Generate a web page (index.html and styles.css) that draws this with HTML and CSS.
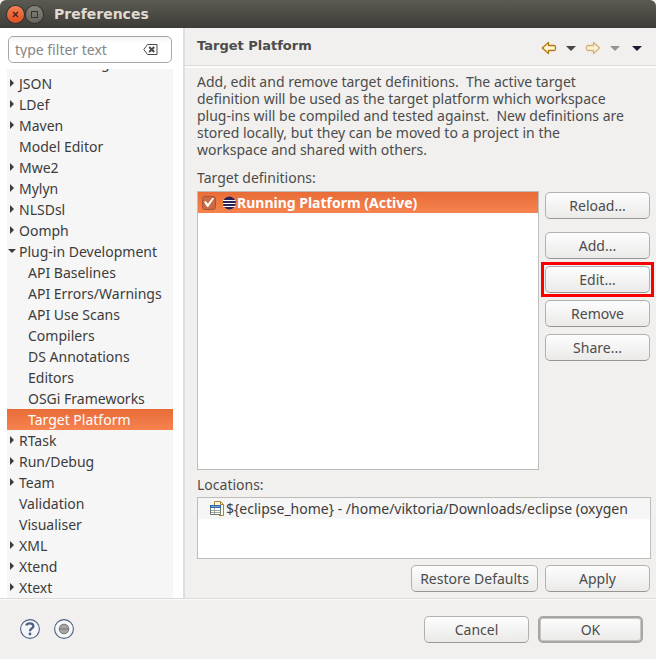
FILE: index.html
```html
<!DOCTYPE html>
<html lang="en">
<head>
<meta charset="utf-8">
<title>Preferences</title>
<link rel="stylesheet" href="styles.css">
</head>
<body>
<header class="titlebar">
  <button class="win close" aria-label="Close"><svg width="17" height="17" viewBox="0 0 17 17"><path d="M6 6l5 5M11 6l-5 5" stroke="#43210f" stroke-width="1.3"/></svg></button>
  <button class="win max" aria-label="Maximize"><svg width="17" height="17" viewBox="0 0 17 17"><rect x="5.5" y="5.5" width="6" height="6" fill="none" stroke="#35342f"/></svg></button>
  <span class="title">Preferences</span>
</header>
<div class="body">
  <nav class="side">
    <div class="filter">
      <input type="text" placeholder="type filter text" aria-label="Filter preferences">
      <button class="clear" aria-label="Clear filter"><svg width="15" height="11" viewBox="0 0 15 11"><path d="M4.5.5h9.500v10H4.500L.8 5.500z" fill="none" stroke="#4a4a48"/><path d="M6.200 3l5 5M11.200 3l-5 5" stroke="#4a4a48" stroke-width="2"/></svg></button>
    </div>
    <ul class="tree">
      <li class="cut">g</li>
      <li class="shut">JSON</li>
      <li class="shut">LDef</li>
      <li class="shut">Maven</li>
      <li>Model Editor</li>
      <li class="shut">Mwe2</li>
      <li class="shut">Mylyn</li>
      <li class="shut">NLSDsl</li>
      <li class="shut">Oomph</li>
      <li class="open">Plug-in Development</li>
      <li class="sub">API Baselines</li>
      <li class="sub">API Errors/Warnings</li>
      <li class="sub">API Use Scans</li>
      <li class="sub">Compilers</li>
      <li class="sub">DS Annotations</li>
      <li class="sub">Editors</li>
      <li class="sub">OSGi Frameworks</li>
      <li class="sub chosen">Target Platform</li>
      <li class="shut">RTask</li>
      <li class="shut">Run/Debug</li>
      <li class="shut">Team</li>
      <li>Validation</li>
      <li>Visualiser</li>
      <li class="shut">XML</li>
      <li class="shut">Xtend</li>
      <li class="shut">Xtext</li>
    </ul>
  </nav>
  <main class="page">
    <div class="pagehead">
      <h1>Target Platform</h1>
      <div class="history">
        <button aria-label="Back"><svg width="16" height="14" viewBox="0 0 16 14"><path d="M7.500 1.500v3h5.500q1.500 0 1.500 1.500v2q0 1.500-1.500 1.500H7.500v3L1.300 7z" fill="#fff6cf" stroke="#b07a10" stroke-width="1.300" stroke-linejoin="round"/></svg></button>
        <button aria-label="Back history"><svg width="10" height="5" viewBox="0 0 10 5"><path d="M0 0h10L5 5z" fill="#454543"/></svg></button>
        <button aria-label="Forward"><svg width="16" height="14" viewBox="0 0 16 14"><path d="M8.500 1.500v3H3q-1.500 0-1.500 1.500v2q0 1.500 1.500 1.500h5.500v3L14.700 7z" fill="#faf0d6" stroke="#d5b278" stroke-width="1.300" stroke-linejoin="round"/></svg></button>
        <button aria-label="Forward history"><svg width="10" height="5" viewBox="0 0 10 5"><path d="M0 0h10L5 5z" fill="#939390"/></svg></button>
        <button aria-label="View menu"><svg width="10" height="5" viewBox="0 0 10 5"><path d="M0 0h10L5 5z" fill="#241537"/></svg></button>
      </div>
    </div>
    <div class="content">
      <p class="about">Add, edit and remove target definitions.&nbsp; The active target<br>definition will be used as the target platform which workspace<br>plug-ins will be compiled and tested against.&nbsp; New definitions are<br>stored locally, but they can be moved to a project in the<br>workspace and shared with others.</p>
      <h2>Target definitions:</h2>
      <div class="targets">
        <div class="list">
          <label class="target"><input type="checkbox" checked>
            <svg width="14" height="14" viewBox="0 0 14 14"><circle cx="6.500" cy="7" r="6.500" fill="#f7941e"/><circle cx="7.300" cy="7" r="6.500" fill="#2c2255"/><path d="M1 4.500h12.500M1 7.500h12.500M1 10.500h12.500" stroke="#fff"/></svg>
            <span>Running Platform (Active)</span></label>
        </div>
        <div class="actions">
          <button class="btn reload">Reload...</button>
          <button class="btn">Add...</button>
          <button class="btn marked">Edit...</button>
          <button class="btn">Remove</button>
          <button class="btn">Share...</button>
        </div>
      </div>
      <h2>Locations:</h2>
      <ul class="locations">
        <li><svg width="14" height="15" viewBox="0 0 14 15"><path d="M4.500 4V.5h6l3 3V14.500H9" fill="#fffbe8" stroke="#a8842c"/><path d="M10.500.5v3h3" fill="none" stroke="#a8842c"/><path d="M.5 4.500h10v9H.5z" fill="#fff" stroke="#6f7770"/><path d="M0 4h11v3H0z" fill="#2f65a8"/><path d="M1 5.500h9" stroke="#79a9dc"/><path d="M1 9.500h9.500M1 11.500h9.500M4.500 7v6.500" stroke="#8b9189" stroke-width=".8"/></svg><span>${eclipse_home} - /home/viktoria/Downloads/eclipse (oxygen</span></li>
      </ul>
      <div class="pagebuttons">
        <button class="btn wide">Restore Defaults</button>
        <button class="btn">Apply</button>
      </div>
    </div>
  </main>
</div>
<footer class="foot">
  <button class="round" aria-label="Help"><svg width="22" height="22" viewBox="0 0 22 22"><circle cx="11" cy="11" r="9.400" fill="#f4f6f9" stroke="#4d6185" stroke-width="1.100"/><path d="M7.400 7.500Q7.700 5.300 11 5.300T14.400 8q0 1.500-1.700 2.500T11 13.200" fill="none" stroke="#4d6185" stroke-width="2.300"/><circle cx="11" cy="16" r="1.400" fill="#4d6185"/></svg></button>
  <button class="round" aria-label="Record"><svg width="22" height="22" viewBox="0 0 22 22"><circle cx="11" cy="11" r="9.400" fill="#f6f7f9" stroke="#4d6185" stroke-width="1.100"/><circle cx="11" cy="11" r="4.800" fill="#a5a5a5" stroke="#777"/><path d="M7 11h8" stroke="#8c8c8c" stroke-width="2"/></svg></button>
  <span class="gap"></span>
  <button class="btn">Cancel</button>
  <button class="btn ok">OK</button>
</footer>
</body>
</html>
```
FILE: styles.css
```css
* { box-sizing: border-box; }
body {
  margin: 0;
  min-height: 100vh;
  display: flex;
  flex-direction: column;
  background: #f1f0ee;
  color: #4c4c4c;
  font: 14px/17px "Noto Sans", "Open Sans", sans-serif;
}
button { font: inherit; color: inherit; padding: 0; border: 0; background: none; }
svg { display: block; flex: none; }
ul { list-style: none; margin: 0; padding: 0; }
h1, h2, p { margin: 0; }

.titlebar {
  height: 28px;
  flex: none;
  display: flex;
  align-items: center;
  gap: 2px;
  padding-left: 7px;
  border-radius: 6px 6px 0 0;
  background: linear-gradient(#5b5a52, #3d3c37);
}
.win { width: 17px; height: 17px; border-radius: 50%; box-shadow: 0 0 0 1px #33322e; }
.close { background: linear-gradient(#f58058, #e04f1f); }
.max { background: linear-gradient(#85837b, #66645d); }
.title { margin-left: 9px; color: #dfdbd2; font: bold 14px/17px "DejaVu Sans", sans-serif; }

.body { flex: 1; display: flex; }
.side {
  width: 185px;
  flex: none;
  padding: 8px 10px 0 7px;
  background: #fff;
  border-right: 2px solid #e0dfdd;
}
.filter {
  display: flex;
  align-items: center;
  height: 27px;
  margin: 0 0 6px 1px;
  width: 164px;
  border: 1px solid #a9a7a4;
  border-radius: 5px;
  padding: 0 13px 0 6px;
  background: linear-gradient(#f4f4f4, #fff 6px);
}
.filter input {
  flex: 1;
  min-width: 0;
  border: 0;
  padding: 0;
  background: none;
  font: inherit;
  color: #4c4c4c;
  outline: 0;
}
.filter input::placeholder { color: #858585; opacity: 1; }
.tree { width: 166px; background: #f6f6f6; color: #3c3c3c; line-height: 21px; }
.tree li {
  display: flex;
  align-items: center;
  height: 21px;
  padding-left: 12px;
  white-space: nowrap;
  position: relative;
}
.tree .sub { padding-left: 21px; }
.tree .cut { height: 4px; align-items: flex-end; padding-left: 94px; overflow: hidden; }
.tree .chosen { background: linear-gradient(#e86c38, #f6834f); color: #fff; }
.shut::before, .open::before { content: ""; position: absolute; background: #3c3c3c; }
.shut::before { left: 3px; top: 6px; width: 4px; height: 8px; clip-path: polygon(0 0, 100% 50%, 0 100%); }
.open::before { left: 1px; top: 8px; width: 8px; height: 4px; clip-path: polygon(0 0, 100% 0, 50% 100%); }

.page { flex: 1; min-width: 0; display: flex; flex-direction: column; }
.pagehead {
  height: 40px;
  display: flex;
  align-items: center;
  justify-content: space-between;
  padding: 0 14px 4px 12px;
  border-bottom: 2px solid #fafafa;
  box-shadow: inset 0 -1px #dcdbd9;
}
h1 { font: bold 13px/17px "DejaVu Sans", sans-serif; }
.history { display: flex; align-items: center; gap: 9px; padding-top: 6px; }
.history button:nth-child(4) { margin-right: 3px; }
.content { flex: 1; display: flex; flex-direction: column; padding: 5px 5px 6px 12px; }
.about { white-space: nowrap; margin-bottom: 11px; }
h2 { font: inherit; }
.targets { flex: 1; display: flex; gap: 6px; margin: 5px 0 6px; }
.list {
  flex: 1;
  min-width: 0;
  border: 1px solid #bfbdba;
  background: #fff;
}
.target {
  display: flex;
  align-items: center;
  height: 21px;
  padding-left: 4px;
  background: linear-gradient(#e86c38, #f6834f);
  color: #fff;
  font-weight: bold;
}
.target svg { margin: 1px 1px 0 6px; }
.target input {
  appearance: none;
  width: 14px;
  height: 14px;
  margin: 0;
  border: 1px solid #a95431;
  border-radius: 3px;
  background: #c96a45;
  display: grid;
  place-items: center;
}
.target input::before {
  content: "";
  width: 10px;
  height: 10px;
  background: #fff;
  clip-path: polygon(0 45%, 18% 35%, 38% 62%, 88% 0, 100% 10%, 42% 95%, 32% 95%);
}
.actions { width: 106px; padding: 1px 1px 0 0; display: flex; flex-direction: column; gap: 7px; }
.btn {
  position: relative;
  width: 105px;
  height: 27px;
  border: 1px solid #b3b1ae;
  border-bottom-color: #989692;
  border-radius: 5px;
  background: linear-gradient(#fdfdfd, #ebeae9);
}
.reload { margin-bottom: 6px; }
.marked::after { content: ""; position: absolute; inset: -5px; border: 3px solid #f80000; }
.locations {
  height: 62px;
  margin-top: 4px;
  border: 1px solid #bfbdba;
  background: #fff;
  color: #3c3c3c;
  overflow: hidden;
}
.locations li {
  display: flex;
  align-items: center;
  gap: 2px;
  height: 21px;
  padding-left: 12px;
  background: #f6f6f6;
  white-space: nowrap;
}
.pagebuttons { display: flex; justify-content: flex-end; gap: 7px; margin-top: 6px; padding-right: 1px; }
.wide { width: 127px; }

.foot {
  flex: none;
  height: 61px;
  display: flex;
  align-items: center;
  padding: 0 13px 0 19px;
  border-top: 1px solid #dcdbd9;
  box-shadow: inset 0 1px #fafafa;
  gap: 12px;
}
.gap { flex: 1; }
.foot .btn { margin-left: -3px; }
.ok { border: 2px solid #a8a6a3; box-shadow: inset 0 0 0 1px #c8c6c4; }
```
